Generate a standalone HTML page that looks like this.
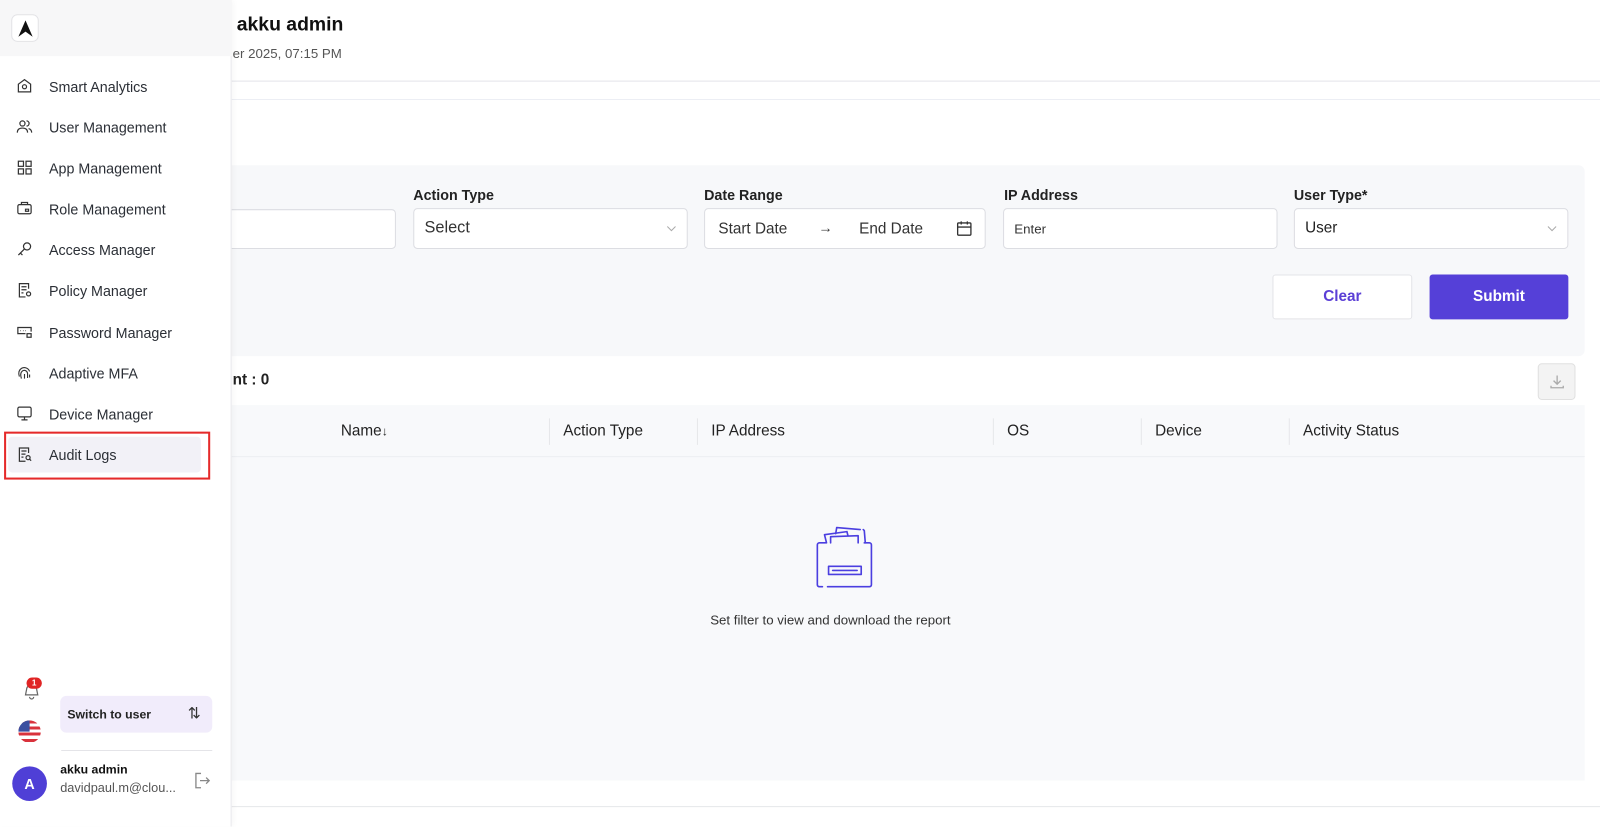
<!DOCTYPE html>
<html><head><meta charset="utf-8"><style>
*{box-sizing:border-box;margin:0;padding:0}
body{width:1600px;height:810px;overflow:hidden;background:#fff;font-family:"Liberation Sans",Arial,sans-serif;color:#1f2328;position:relative}
#w{position:absolute;left:0;top:0;width:1568px;height:794px;transform:scale(1.0204);transform-origin:0 0}
.abs{position:absolute}
.sb{left:0;top:0;width:227px;height:810px;background:#fff;border-right:1px solid #e8e8ec;box-shadow:2px 0 6px rgba(0,0,0,.04)}
.sbtop{left:0;top:0;width:227px;height:55px;background:#f7f7f8}
.logo{left:11px;top:14px;width:27px;height:27px;border:1px solid #e3e3e6;border-radius:6px;background:#fff}
.nav{left:16px;font-size:14px;color:#2b2f36}
.nav svg{position:absolute;left:0;top:0}
.nav span{position:absolute;left:32px;top:1px;white-space:nowrap}
.lbl{font-size:14px;font-weight:bold;color:#222}
.inp{height:40px;border:1px solid #dcdde2;border-radius:4px;background:#fff}
.th{top:414px;font-size:15px;color:#222}
.sep{top:410px;width:1px;height:26px;background:#e6e7ea}
</style></head><body><div id="w">
<div class="abs" style="left:232px;top:14px;font-size:19px;font-weight:bold;color:#111">akku admin</div>
<div class="abs" style="left:228px;top:45px;font-size:13px;color:#555">er 2025, 07:15 PM</div>
<div class="abs" style="left:227px;top:79px;width:1373px;height:1px;background:#e3e4ea"></div>
<div class="abs" style="left:227px;top:97px;width:1373px;height:1px;background:#eceef4"></div>
<div class="abs" style="left:227px;top:162px;width:1326px;height:187px;background:#f7f8fa;border-radius:0 6px 6px 0"></div>
<div class="abs inp" style="left:200px;top:205px;width:188px;height:39px"></div>
<div class="abs lbl" style="left:405px;top:183px">Action Type</div>
<div class="abs inp" style="left:405px;top:204px;width:269px"><span class="abs" style="left:10px;top:10px;font-size:16px;color:#333">Select</span><svg class="abs" style="right:10px;top:16px" width="10" height="6" viewBox="0 0 10 6" fill="none" stroke="#aaa" stroke-width="1"><path d="M1 1l4 4 4-4"/></svg></div>
<div class="abs lbl" style="left:690px;top:183px">Date Range</div>
<div class="abs inp" style="left:690px;top:204px;width:276px"><span class="abs" style="left:13px;top:11px;font-size:15px;color:#333">Start Date</span><span class="abs" style="left:111px;top:10px;font-size:14px;color:#333">→</span><span class="abs" style="left:151px;top:11px;font-size:15px;color:#333">End Date</span>
<svg class="abs" style="left:246px;top:11px" width="16" height="16" viewBox="0 0 16 16" fill="none" stroke="#333" stroke-width="1.3"><rect x="1.5" y="2.5" width="13" height="12" rx="1"/><path d="M1.5 6.5h13M5 1v3M11 1v3"/></svg></div>
<div class="abs lbl" style="left:984px;top:183px">IP Address</div>
<div class="abs inp" style="left:983px;top:204px;width:269px"><span class="abs" style="left:10px;top:12px;font-size:13px;color:#333">Enter</span></div>
<div class="abs lbl" style="left:1268px;top:183px">User Type*</div>
<div class="abs inp" style="left:1268px;top:204px;width:269px"><span class="abs" style="left:10px;top:10px;font-size:15px;color:#222">User</span><svg class="abs" style="right:10px;top:16px" width="10" height="6" viewBox="0 0 10 6" fill="none" stroke="#aaa" stroke-width="1"><path d="M1 1l4 4 4-4"/></svg></div>
<div class="abs" style="left:1247px;top:269px;width:137px;height:44px;background:#fff;border:1px solid #e3e4e8;border-radius:3px;text-align:center;line-height:42px;font-size:15px;font-weight:bold;color:#5b3fd6">Clear</div>
<div class="abs" style="left:1401px;top:269px;width:136px;height:44px;background:#5540d8;border-radius:3px;text-align:center;line-height:44px;font-size:15px;font-weight:bold;color:#fff">Submit</div>
<div class="abs" style="left:228px;top:364px;font-size:15px;font-weight:bold;color:#222">nt : 0</div>
<div class="abs" style="left:1507px;top:356px;width:37px;height:36px;border:1px solid #e0e0e0;border-radius:4px;background:#f3f3f3">
<svg class="abs" style="left:10px;top:9px" width="16" height="16" viewBox="0 0 16 16" fill="none" stroke="#aaa" stroke-width="1.3"><path d="M8 2v8M4.5 7L8 10.5 11.5 7M2 12v2h12v-2"/></svg></div>
<div class="abs" style="left:227px;top:397px;width:1326px;height:368px;background:#f8f9fb"></div>
<div class="abs" style="left:227px;top:447px;width:1326px;height:1px;background:#eceef2"></div>
<div class="abs th" style="left:334px">Name<span style="font-size:12px">↓</span></div>
<div class="abs sep" style="left:538px"></div>
<div class="abs th" style="left:552px">Action Type</div>
<div class="abs sep" style="left:683px"></div>
<div class="abs th" style="left:697px">IP Address</div>
<div class="abs sep" style="left:973px"></div>
<div class="abs th" style="left:987px">OS</div>
<div class="abs sep" style="left:1118px"></div>
<div class="abs th" style="left:1132px">Device</div>
<div class="abs sep" style="left:1263px"></div>
<div class="abs th" style="left:1277px">Activity Status</div>
<svg class="abs" style="left:797px;top:515px" width="62" height="62" viewBox="0 0 62 62" fill="none" stroke="#4b3fe0" stroke-width="1.6" stroke-linejoin="round" stroke-linecap="round">
<path d="M22 8l1-6 23 2"/><path d="M49 4l1 1 1 12"/><path d="M13 17l-2-8 22-3 1 4"/><path d="M17 17v-6l27-1v7"/>
<path d="M12 17H6a2 2 0 00-2 2v39a2 2 0 002 2h3M14 60h41a2 2 0 002-2V19a2 2 0 00-2-2h-5"/>
<rect x="15" y="40" width="32" height="8"/><path d="M19 44h24"/></svg>
<div class="abs" style="left:696px;top:600px;font-size:13px;color:#333">Set filter to view and download the report</div>
<div class="abs" style="left:227px;top:790px;width:1373px;height:1px;background:#e6e7ea"></div>
<div class="abs sb"></div>
<div class="abs sbtop"></div>
<div class="abs logo"><svg class="abs" style="left:5px;top:5px" width="16" height="16" viewBox="0 0 16 16"><path d="M8 0L15 16 8 11 1 16Z" fill="#111"/></svg></div>
<div class="abs nav" style="top:76px"><svg width="16" height="16" viewBox="0 0 16 16" fill="none" stroke="#333" stroke-width="1.2"><path d="M2 6.5L8 2l6 4.5V14H2Z"/><circle cx="8" cy="9" r="2"/></svg><span>Smart Analytics</span></div>
<div class="abs nav" style="top:116px"><svg width="16" height="16" viewBox="0 0 16 16" fill="none" stroke="#333" stroke-width="1.2"><circle cx="6" cy="5" r="2.5"/><path d="M1 14c0-3 2-4.5 5-4.5s5 1.5 5 4.5M10 2.5a2.5 2.5 0 010 5M12 10c2 .5 3 2 3 4"/></svg><span>User Management</span></div>
<div class="abs nav" style="top:156px"><svg width="16" height="16" viewBox="0 0 16 16" fill="none" stroke="#333" stroke-width="1.2"><rect x="2" y="2" width="5" height="5"/><rect x="9.5" y="2" width="5" height="5"/><rect x="2" y="9.5" width="5" height="5"/><rect x="9.5" y="9.5" width="5" height="5"/></svg><span>App Management</span></div>
<div class="abs nav" style="top:196px"><svg width="16" height="16" viewBox="0 0 16 16" fill="none" stroke="#333" stroke-width="1.2"><rect x="1.5" y="4.5" width="13" height="9" rx="1.5"/><path d="M5 4.5V2.5h6v2M9 9h3v2H9z"/></svg><span>Role Management</span></div>
<div class="abs nav" style="top:236px"><svg width="16" height="16" viewBox="0 0 16 16" fill="none" stroke="#333" stroke-width="1.2"><circle cx="10.5" cy="5.5" r="3.5"/><path d="M8 8l-6 6M4 12l2 2"/></svg><span>Access Manager</span></div>
<div class="abs nav" style="top:276px"><svg width="16" height="16" viewBox="0 0 16 16" fill="none" stroke="#333" stroke-width="1.2"><path d="M12 7V2H3v13h6"/><path d="M5 5h5M5 8h5M5 11h2"/><circle cx="12" cy="12" r="2"/></svg><span>Policy Manager</span></div>
<div class="abs nav" style="top:317px"><svg width="16" height="16" viewBox="0 0 16 16" fill="none" stroke="#333" stroke-width="1.2"><path d="M9 10H1.5V4h13v4"/><path d="M4 7h.5M6.5 7h.5M9 7h.5"/><rect x="10.5" y="10" width="4" height="3.5"/></svg><span>Password Manager</span></div>
<div class="abs nav" style="top:357px"><svg width="16" height="16" viewBox="0 0 16 16" fill="none" stroke="#333" stroke-width="1.1"><path d="M3 12c-1-3-1-6 2-8 3-2 7 0 8 3M5 14c-1-3-1-6 1-7.5s5 0 5 3v4M8 14V9.5M13 10v3"/></svg><span>Adaptive MFA</span></div>
<div class="abs nav" style="top:397px"><svg width="16" height="16" viewBox="0 0 16 16" fill="none" stroke="#333" stroke-width="1.2"><rect x="1.5" y="2" width="13" height="9.5" rx="1.5"/><path d="M8 11.5V14M5 14.5h6"/></svg><span>Device Manager</span></div>
<div class="abs" style="left:8px;top:428px;width:189px;height:35px;background:#f2f1f7;border-radius:4px"></div>
<div class="abs" style="left:4px;top:423px;width:202px;height:47px;border:2px solid #e52a2a"></div>
<div class="abs nav" style="top:437px"><svg width="16" height="16" viewBox="0 0 16 16" fill="none" stroke="#333" stroke-width="1.2"><path d="M12 7V2H3v13h6"/><path d="M5 5h5M5 8h4M5 11h2"/><circle cx="11.5" cy="11.5" r="2"/><path d="M13 13l1.5 1.5"/></svg><span>Audit Logs</span></div>
<svg class="abs" style="left:22px;top:668px" width="18" height="18" viewBox="0 0 18 18" fill="none" stroke="#666" stroke-width="1.2"><path d="M3 13l1-5a5 5 0 0110 0l1 5zM7 15a2 2 0 004 0"/></svg>
<div class="abs" style="left:26px;top:664px;width:15px;height:11px;background:#e02424;border-radius:6px;color:#fff;font-size:8px;font-weight:bold;text-align:center;line-height:11px">1</div>
<div class="abs" style="left:18px;top:706px;width:22px;height:22px;border-radius:50%;overflow:hidden;background:repeating-linear-gradient(#d9323c 0 3px,#fff 3px 6px)"><div style="width:11px;height:11px;background:#3b4fa0"></div></div>
<div class="abs" style="left:59px;top:682px;width:149px;height:36px;background:#f1ecfb;border-radius:6px"><span class="abs" style="left:7px;top:11px;font-size:12px;font-weight:bold;color:#222">Switch to user</span><span class="abs" style="left:125px;top:8px;font-size:15px;color:#333">⇅</span></div>
<div class="abs" style="left:60px;top:735px;width:148px;height:1px;background:#e4e4e8"></div>
<div class="abs" style="left:12px;top:751px;width:34px;height:34px;border-radius:50%;background:#4f3fd6;color:#fff;font-size:14px;font-weight:bold;text-align:center;line-height:34px">A</div>
<div class="abs" style="left:59px;top:747px;font-size:12px;font-weight:bold;color:#111">akku admin</div>
<div class="abs" style="left:59px;top:765px;font-size:12.5px;color:#555">davidpaul.m@clou...</div>
<svg class="abs" style="left:189px;top:756px" width="18" height="18" viewBox="0 0 18 18" fill="none" stroke="#888" stroke-width="1.3"><path d="M8 2H3v14h5M7 9h9M13 6l3 3-3 3"/></svg>
</div></body></html>
